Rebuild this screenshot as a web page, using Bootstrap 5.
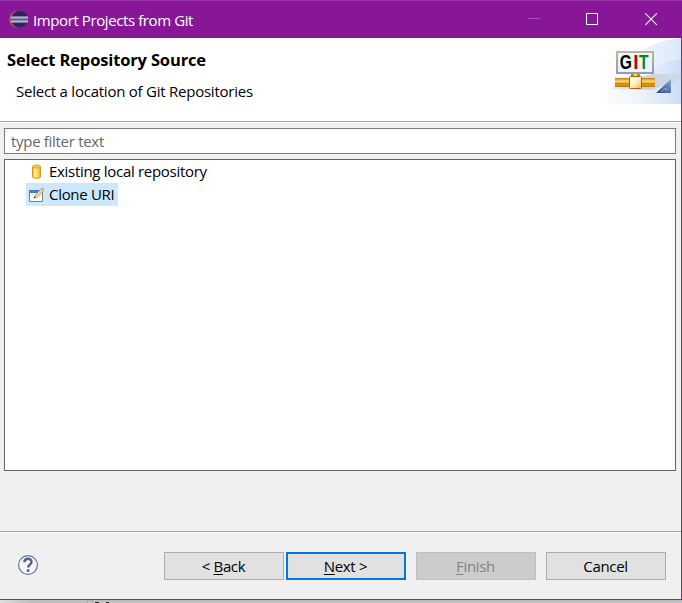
<!DOCTYPE html>
<html lang="en">
<head>
<meta charset="utf-8">
<meta name="viewport" content="width=device-width, initial-scale=1">
<title>Import Projects from Git</title>
<link href="https://cdn.jsdelivr.net/npm/bootstrap@5.3.0/dist/css/bootstrap.min.css" rel="stylesheet">
<style>
body{width:682px;height:603px;font:15px/20px "Open Sans","Noto Sans",sans-serif;color:#000;background:#c3c3c3}
svg{display:block;flex:none}
.wizard{height:600px;background:#f0f0f0;border-right:1px solid #882d95;border-bottom:1px solid #882d95}
.titlebar{height:38px;background:#881798;border-top:1px solid #9430a2;color:#fff;padding-left:9px;margin-right:-1px}
.titlebar .caption{margin:0 0 0 4px;letter-spacing:-.4px}
.banner{height:84px;background:#fff;border-bottom:1px solid #a0a0a0;padding-left:7px}
.banner h1{font-size:16.5px;line-height:22px;font-weight:700;margin:11px 0 0;letter-spacing:-.15px}
.banner p{margin:10px 0 0 9px;letter-spacing:-.24px}
.main-area{height:409px;border-top:1px solid #fff;padding:5px 5px 0 4px}
.filter-box{height:26px;border:1px solid #7a7a7a;border-radius:0;padding:0 6px;font-size:15px;line-height:24px;letter-spacing:-.3px;color:#000;background:#fff;min-height:0}
.filter-box::placeholder{color:#666;opacity:1}
.filter-box:focus{box-shadow:none}
.source-tree{height:312px;margin-top:5px;border:1px solid #646464;background:#fff;padding-left:21px;border-radius:0}
.source-item{height:23px;gap:4px;padding:0 4px 0 3px;align-self:flex-start;letter-spacing:-.3px;white-space:nowrap;border:0;background:none;color:#000}
.source-item span{margin-top:-2px}
.source-item.selected{background:#cce8ff}
.wizard-foot{height:68px;border-top:1px solid #a0a0a0;box-shadow:inset 0 1px #fff;padding:20px 15px 0 17px}
.btn-wiz{width:120px;height:28px;padding:0 1px 0 0;border:1px solid #adadad;border-radius:0;background:#e1e1e1;color:#000;font-size:15px;line-height:26px;letter-spacing:-.35px}
.btn-wiz.preferred{border:2px solid #0078d7;line-height:24px}
.btn-wiz:disabled{background:#ccc;border-color:#bfbfbf;color:#838383;opacity:1}
.btn-wiz u{text-underline-offset:2px;text-decoration-thickness:1px}
.behind{height:3px;background:linear-gradient(#b4b4b4,#c9c9c9)}
.behind span{display:block;height:3px}
.behind .pane{width:87px;background:linear-gradient(90deg,#dedede,#bebebe 30px)}
.behind .seam{width:6px;border:solid #aaa;border-width:0 1px}
</style>
<script src="https://cdn.jsdelivr.net/npm/bootstrap@5.3.0/dist/js/bootstrap.bundle.min.js"></script>
</head>
<body class="overflow-hidden">
<div class="wizard d-flex flex-column">
  <header class="titlebar d-flex align-items-center">
    <svg width="20" height="20" viewBox="0 0 20 20"><circle cx="9" cy="9.300" r="8.700" fill="#ca6a4c"/><circle cx="10.300" cy="9.300" r="8.700" fill="#5d2f63"/><circle cx="10.800" cy="9.300" r="8.200" fill="#2c255c"/><path d="M2 6.500h17v6H2z" fill="#665a91"/><path d="M2 7.500h17M2 11.500h17" stroke="#bcb1d4" stroke-width="2"/></svg>
    <span class="caption">Import Projects from Git</span>
    <svg class="ms-auto" width="160" height="37" viewBox="0 0 160 37" fill="none" stroke="#fff"><path d="M6 17.5h12" stroke="#a654b2"/><path d="M64.500 12.500h11v11h-11z"/><path d="M123.300 12.300l11.500 11.500M134.800 12.300l-11.500 11.500" stroke-width="1.1"/></svg>
  </header>
  <section class="banner d-flex">
    <div><h1>Select Repository Source</h1><p>Select a location of Git Repositories</p></div>
    <svg class="ms-auto" width="75" height="66" viewBox="0 0 75 66">
      <defs>
        <linearGradient id="sky" x1="0" y1="0" x2="1" y2="0"><stop stop-color="#fafbff"/><stop offset=".5" stop-color="#f0f5fd"/><stop offset="1" stop-color="#dbe7f9"/></linearGradient>
        <linearGradient id="sky2" x1="0" y1="0" x2="1" y2="0"><stop stop-color="#e6eefb" stop-opacity=".2"/><stop offset="1" stop-color="#c3d6f4"/></linearGradient>
        <linearGradient id="shade" x1="0" y1="0" x2="1" y2="0"><stop stop-color="#aaa" stop-opacity=".15"/><stop offset=".4" stop-color="#999" stop-opacity=".4"/><stop offset="1" stop-color="#c8cedb" stop-opacity=".3"/></linearGradient>
        <linearGradient id="pipe" x1="0" y1="0" x2="0" y2="1"><stop stop-color="#bd7c12"/><stop offset=".35" stop-color="#ffd96b"/><stop offset=".6" stop-color="#e7a820"/><stop offset="1" stop-color="#b9790c"/></linearGradient>
        <linearGradient id="hub" x1="0" y1="0" x2="1" y2="1"><stop stop-color="#fff"/><stop offset=".45" stop-color="#fff3cf"/><stop offset="1" stop-color="#eab646"/></linearGradient>
        <linearGradient id="frame" x1="0" y1="0" x2="0" y2="1"><stop stop-color="#bdb59a"/><stop offset="1" stop-color="#8e9db9"/></linearGradient>
        <linearGradient id="fin" x1="0" y1="1" x2="1" y2="0"><stop stop-color="#244279"/><stop offset="1" stop-color="#8ba9d8"/></linearGradient>
      </defs>
      <path d="M0 66C4 34 30 4 75 0V66Z" fill="url(#sky)"/>
      <path d="M22 66C30 42 48 24 75 21V66Z" fill="url(#sky2)" opacity=".6"/>
      <path d="M4 51l14-8 30-7h27v5L46 52Z" fill="url(#shade)"/>
      <g transform="translate(1 0)">
      <rect x="10" y="14" width="36" height="21" fill="#edf5fb" stroke="url(#frame)" stroke-width="2"/>
      <text y="31.500" font-family="Liberation Sans, sans-serif" font-weight="700" font-size="20.500" transform="translate(13 0) scale(.76 1)"><tspan x="-.3">G</tspan><tspan x="18">I</tspan></text>
      <text y="31.500" font-family="Liberation Sans, sans-serif" font-weight="700" font-size="20.500" transform="translate(13 0) scale(.76 1)"><tspan x="18" fill="#c8000f">I</tspan><tspan x="25" fill="#078318">T</tspan></text>
      <path d="M24 36h9v4h-9z" fill="#c98711"/><path d="M27 36h3v3h-3z" fill="#ffe08a"/>
      <path d="M8 40h40v9H8z" fill="url(#pipe)"/><path d="M8 45.500h40" stroke="#c6880f"/>
      <rect x="22.500" y="38.500" width="12" height="12" rx="1" fill="url(#hub)" stroke="#a6670c"/>
      <path d="M49 55L64 41V55Z" fill="url(#fin)"/><path d="M54 54l4-4 1 3M58 51h3" stroke="#91acd7" fill="none" stroke-width=".8"/>
      </g>
    </svg>
  </section>
  <main class="main-area d-flex flex-column">
    <input class="form-control filter-box" type="text" placeholder="type filter text" aria-label="Filter">
    <div class="source-tree list-group">
      <div class="source-item d-flex align-items-center">
        <svg width="16" height="16" viewBox="0 0 16 16"><defs><linearGradient id="drum"><stop stop-color="#e8bb35"/><stop offset=".35" stop-color="#fff1a0"/><stop offset="1" stop-color="#e2b02a"/></linearGradient></defs><path d="M3.500 2.500v10.300c0 2 8 2 8 0V2.500" fill="url(#drum)" stroke="#cf9c20"/><ellipse cx="7.500" cy="2.500" rx="4" ry="1.500" fill="#f6d965" stroke="#cf9c20"/></svg>
        <span>Existing local repository</span>
      </div>
      <div class="source-item selected d-flex align-items-center">
        <svg width="16" height="16" viewBox="0 0 16 16"><path d="M.500 3.500h13v11H.500z" fill="#f5faff" stroke="#8b8061"/><path d="M0 3h12v3H0z" fill="#3f80c4"/><path d="M.500 3v6" stroke="#3f80c4"/><path d="M5 11l1.200-3L12.300 1.500l2.500 2.200-6.500 6.300Z" fill="#f4cfa6" stroke="#b58056" stroke-width=".7"/><path d="M12 1.600l1.300-1.300 2.200 2-1.200 1.500Z" fill="#d9a09a"/><path d="M4.800 11.200l.7-2 1.300 1.200Z" fill="#333"/></svg>
        <span>Clone URI</span>
      </div>
    </div>
  </main>
  <footer class="wizard-foot d-flex">
    <svg width="22" height="28" viewBox="0 0 22 28"><circle cx="11" cy="13" r="9.400" fill="#f5f6f8" stroke="#64779b" stroke-width="1.200"/><path d="M7.400 10.300C7.400 5.600 14.500 5.600 14.500 9.800c0 3-3.300 2.700-3.300 5.800" fill="none" stroke="#50648c" stroke-width="2.500"/><circle cx="11.100" cy="18.500" r="1.500" fill="#50648c"/></svg>
    <div class="d-flex ms-auto">
      <button class="btn btn-wiz" type="button">&lt; <u>B</u>ack</button>
      <button class="btn btn-wiz preferred" style="margin-left:2px" type="button"><u>N</u>ext &gt;</button>
      <button class="btn btn-wiz" style="margin-left:10px" type="button" disabled><u>F</u>inish</button>
      <button class="btn btn-wiz" style="margin-left:10px" type="button">Cancel</button>
    </div>
  </footer>
</div>
<div class="behind d-flex overflow-hidden">
  <span class="pane"></span><span class="seam"></span>
  <svg width="20" height="3" viewBox="0 0 20 3"><path d="M2 2.500h4M13 2.500h3" stroke="#222"/></svg>
</div>
</body>
</html>
